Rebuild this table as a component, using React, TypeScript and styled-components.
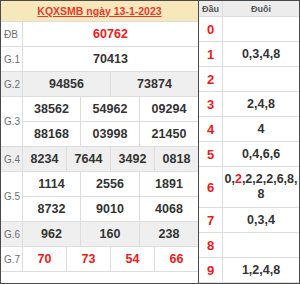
import React from 'react';
import styled, { createGlobalStyle } from 'styled-components';

const Global = createGlobalStyle`
  html, body { margin: 0; padding: 0; background: #fff; }
  body { font-family: "Liberation Sans", Arial, sans-serif; }
`;

const Frame = styled.div`
  width: 300px;
  height: 284px;
  box-sizing: border-box;
  border: 1px solid #4a4a4a;
  display: flex;
  overflow: hidden;
  background: #fff;
  font-family: "Liberation Sans", Arial, sans-serif;
`;

const LeftPanel = styled.div`
  width: 198px;
  box-sizing: border-box;
  border-right: 1px solid #4a4a4a;
  display: flex;
  flex-direction: column;
  flex: none;
`;

const RightPanel = styled.div`
  flex: 1;
  display: flex;
  flex-direction: column;
`;

const TitleBar = styled.div`
  height: 21px;
  box-sizing: border-box;
  border-bottom: 1px solid #ddd;
  background: #f7e8bb;
  display: flex;
  align-items: center;
  justify-content: center;
`;

const Title = styled.a`
  color: #e53b2f;
  font-weight: bold;
  font-size: 10.5px;
  text-decoration: underline;
`;

const Row = styled.div<{ $grey?: boolean }>`
  display: grid;
  grid-template-columns: 22px 1fr;
  border-bottom: 1px solid #ddd;
  background: ${p => (p.$grey ? '#efefef' : '#fff')};
`;

const Label = styled.div`
  box-sizing: border-box;
  border-right: 1px solid #ddd;
  display: flex;
  align-items: center;
  padding-left: 3px;
  font-size: 10px;
  color: #6f6f6f;
`;

const Cells = styled.div<{ $cols: string }>`
  display: grid;
  grid-template-columns: ${p => p.$cols};
  gap: 1px;
  background: #ddd;
`;

const Cell = styled.div<{ $grey?: boolean; $red?: boolean }>`
  height: 24px;
  display: flex;
  align-items: center;
  justify-content: center;
  background: ${p => (p.$grey ? '#efefef' : '#fff')};
  color: ${p => (p.$red ? '#f01818' : '#333')};
  font-weight: bold;
  font-size: 12.5px;
`;

const HeadRow = styled.div`
  height: 21px;
  box-sizing: border-box;
  display: grid;
  grid-template-columns: 24px 1fr;
  border-bottom: 1px solid #ddd;
  background: #ececec;
`;

const HeadCell = styled.div`
  display: flex;
  align-items: center;
  justify-content: center;
  font-size: 9px;
  font-weight: bold;
  color: #555;
  &:first-child { border-right: 1px solid #ddd; }
`;

const LotoRow = styled.div<{ $tall?: boolean }>`
  height: ${p => (p.$tall ? '41px' : '25px')};
  box-sizing: border-box;
  flex: none;
  display: grid;
  grid-template-columns: 24px 1fr;
  border-bottom: 1px solid #ddd;
`;

const Head = styled.div`
  box-sizing: border-box;
  border-right: 1px solid #ddd;
  display: flex;
  align-items: center;
  justify-content: center;
  color: #f01818;
  font-weight: bold;
  font-size: 13px;
`;

const Tail = styled.div`
  display: flex;
  align-items: center;
  justify-content: center;
  text-align: center;
  color: #333;
  font-weight: bold;
  font-size: 12.5px;
  line-height: 15px;
`;

const Red = styled.span`
  color: #f01818;
`;

type Prize = { label: string; nums: string[]; cols: string; grey?: boolean; red?: boolean };

const prizes: Prize[] = [
  { label: 'ĐB', nums: ['60762'], cols: '1fr', red: true },
  { label: 'G.1', nums: ['70413'], cols: '1fr' },
  { label: 'G.2', nums: ['94856', '73874'], cols: '87px 87px', grey: true },
  { label: 'G.3', nums: ['38562', '54962', '09294', '88168', '03998', '21450'], cols: '57px 58px 58px' },
  { label: 'G.4', nums: ['8234', '7644', '3492', '0818'], cols: '43px 43px 43px 43px', grey: true },
  { label: 'G.5', nums: ['1114', '2556', '1891', '8732', '9010', '4068'], cols: '57px 58px 58px' },
  { label: 'G.6', nums: ['962', '160', '238'], cols: '57px 58px 58px', grey: true },
  { label: 'G.7', nums: ['70', '73', '54', '66'], cols: '43px 43px 43px 43px', red: true },
];

const loto: { head: string; tail: React.ReactNode; tall?: boolean }[] = [
  { head: '0', tail: '' },
  { head: '1', tail: '0,3,4,8' },
  { head: '2', tail: '' },
  { head: '3', tail: '2,4,8' },
  { head: '4', tail: '4' },
  { head: '5', tail: '0,4,6,6' },
  {
    head: '6',
    tall: true,
    tail: (
      <span>
        0,<Red>2</Red>,2,2,2,6,8,
        <br />8
      </span>
    ),
  },
  { head: '7', tail: '0,3,4' },
  { head: '8', tail: '' },
  { head: '9', tail: '1,2,4,8' },
];

export default function App() {
  return (
    <>
      <Global />
      <Frame>
        <LeftPanel>
          <TitleBar>
            <Title>KQXSMB ngày 13-1-2023</Title>
          </TitleBar>
          {prizes.map(p => (
            <Row key={p.label} $grey={p.grey}>
              <Label>{p.label}</Label>
              <Cells $cols={p.cols}>
                {p.nums.map((n, i) => (
                  <Cell key={i} $grey={p.grey} $red={p.red}>
                    {n}
                  </Cell>
                ))}
              </Cells>
            </Row>
          ))}
        </LeftPanel>
        <RightPanel>
          <HeadRow>
            <HeadCell>Đầu</HeadCell>
            <HeadCell>Đuôi</HeadCell>
          </HeadRow>
          {loto.map(r => (
            <LotoRow key={r.head} $tall={r.tall}>
              <Head>{r.head}</Head>
              <Tail>{r.tail}</Tail>
            </LotoRow>
          ))}
        </RightPanel>
      </Frame>
    </>
  );
}
